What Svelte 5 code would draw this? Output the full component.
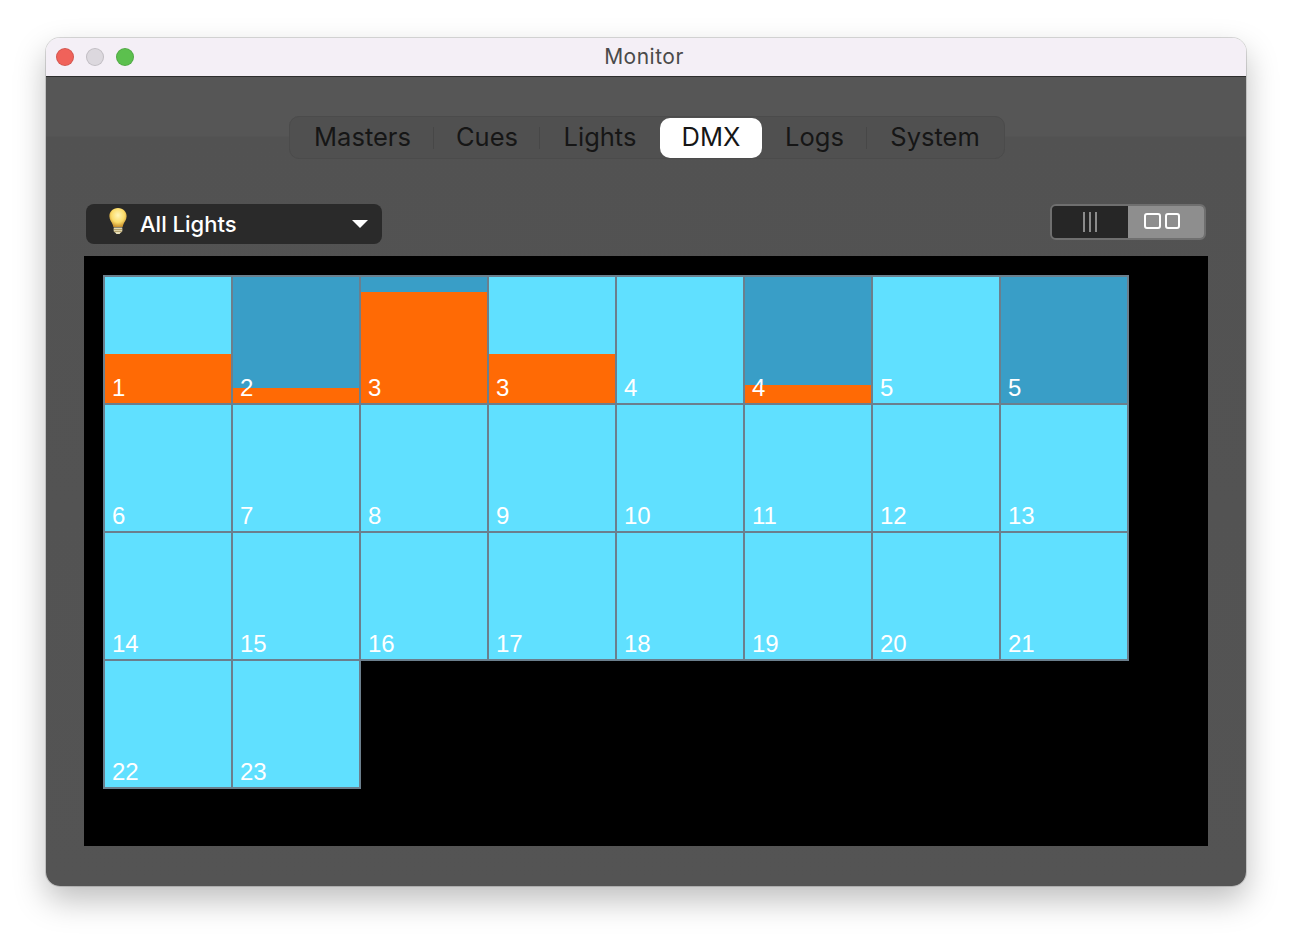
<script>
	const tabs = [
		{ label: 'Masters', width: 143 },
		{ label: 'Cues', width: 106 },
		{ label: 'Lights', width: 120 },
		{ label: 'DMX', width: 102, active: true },
		{ label: 'Logs', width: 105 },
		{ label: 'System', width: 136 }
	];

	// first row carries the live channels, the rest sit idle
	const lights = [
		{ n: 1, level: 49 },
		{ n: 2, level: 15, dim: true },
		{ n: 3, level: 111, dim: true },
		{ n: 3, level: 49 },
		{ n: 4, level: 0 },
		{ n: 4, level: 18, dim: true },
		{ n: 5, level: 0 },
		{ n: 5, level: 0, dim: true }
	];
	for (let n = 6; n <= 23; n++) lights.push({ n, level: 0 });
</script>

<div class="page">
	<div class="window">
		<header class="titlebar">
			<div class="traffic">
				<span class="dot red"></span>
				<span class="dot grey"></span>
				<span class="dot green"></span>
			</div>
			<span class="title">Monitor</span>
		</header>

		<main class="body">
			<nav class="tabs">
				{#each tabs as tab}
					<button class="tab" class:active={tab.active} style="width: {tab.width}px">{tab.label}</button>
				{/each}
			</nav>

			<div class="toolbar">
				<div class="select">
					<svg class="bulb" width="22" height="28" viewBox="0 0 20 26">
						<defs>
							<radialGradient id="glass" cx="50%" cy="38%" r="62%">
								<stop offset="0%" stop-color="#fff6b8" />
								<stop offset="60%" stop-color="#fbdc6a" />
								<stop offset="100%" stop-color="#c8902c" />
							</radialGradient>
						</defs>
						<path d="M10 1C5 1 2 4.600 2 8.600c0 3.400 2.300 5.400 3.200 8 .3.800.4 1.400.5 2h8.600c.1-.6.200-1.200.5-2 .9-2.600 3.200-4.600 3.200-8C18 4.600 15 1 10 1z" fill="url(#glass)" />
						<path d="M6 19h8v3.400c0 .8-.7 1.300-1.400 1.300L11.500 25h-3l-1.100-1.300C6.700 23.700 6 23.200 6 22.400z" fill="#e9dfb8" />
						<path d="M6.200 20.800h7.600M6.400 22.600h7.200" stroke="#a08a50" stroke-width="0.8" />
					</svg>
					<span class="select-label">All Lights</span>
					<span class="caret"></span>
				</div>

				<div class="view-toggle">
					<button class="view">
						<svg width="14" height="20" viewBox="0 0 14 20">
							<path d="M1 0v20M7 0v20M13 0v20" stroke="#8b8b8b" stroke-width="2" fill="none" />
						</svg>
					</button>
					<button class="view on">
						<svg class="cards" width="36" height="16" viewBox="0 0 36 16">
							<rect x="1" y="1" width="15" height="14" rx="2" stroke="#fff" stroke-width="2" fill="none" />
							<rect x="22" y="1" width="13" height="14" rx="2" stroke="#fff" stroke-width="2" fill="none" />
						</svg>
					</button>
				</div>
			</div>

			<section class="canvas">
				<div class="grid">
					{#each lights as light}
						<div class="cell" class:dim={light.dim}>
							{#if light.level}
								<div class="level" style="height: {light.level}px"></div>
							{/if}
							<span class="num">{light.n}</span>
						</div>
					{/each}
				</div>
			</section>
		</main>
	</div>
</div>

<style>
	:global(body) {
		background: #fff;
	}

	.page {
		padding: 38px 46px 54px;
		height: 848px;
	}

	.window {
		width: 1200px;
		height: 848px;
		border-radius: 14px;
		overflow: hidden;
		box-shadow: 0 0 0 1px rgba(0, 0, 0, 0.14), 0 14px 32px rgba(0, 0, 0, 0.26);
		display: flex;
		flex-direction: column;
		font-family: Inter, 'Noto Sans', sans-serif;
	}

	/* Title bar */
	.titlebar {
		height: 38px;
		flex: none;
		background: #f4eff6;
		border-bottom: 1px solid #2e2e2e;
		display: flex;
		align-items: center;
		justify-content: center;
		position: relative;
	}

	.traffic {
		position: absolute;
		left: 10px;
		top: 10px;
		display: flex;
		gap: 12px;
	}

	.dot {
		width: 18px;
		height: 18px;
		border-radius: 50%;
		box-sizing: border-box;
		border: 1px solid rgba(0, 0, 0, 0.12);
	}

	.red { background: #f0625a; }
	.grey { background: #dcd8de; }
	.green { background: #5cc04e; }

	.title {
		font-size: 21px;
		color: #4a4a4a;
		letter-spacing: 0.5px;
		margin: 0 4px 2px 0;
	}

	/* Main area */
	.body {
		flex: 1;
		background: linear-gradient(#565656 0, #565656 59px, #525252 60px, #545454 100%);
		padding: 39px 38px 40px;
		display: flex;
		flex-direction: column;
		align-items: stretch;
	}

	.tabs {
		align-self: center;
		display: flex;
		align-items: center;
		height: 43px;
		box-sizing: border-box;
		padding: 0 1px;
		margin-left: 2px;
		background: #505050;
		border: 1px solid #4b4b4b;
		border-radius: 10px;
	}

	.tab {
		height: 40px;
		padding: 0 0 2px;
		border: 0;
		background: none;
		font: inherit;
		font-size: 25.5px;
		color: #161616;
		position: relative;
	}

	.tab:nth-child(-n + 2)::after,
	.tab:nth-child(5)::after {
		content: '';
		position: absolute;
		right: 0;
		top: 9px;
		width: 1px;
		height: 22px;
		background: #474747;
	}

	.tab.active {
		background: #fff;
		border-radius: 10px;
	}

	.toolbar {
		margin-top: 45px;
		padding: 0 2px;
		display: flex;
		justify-content: space-between;
		align-items: flex-start;
		height: 52px;
	}

	.select {
		width: 296px;
		height: 40px;
		box-sizing: border-box;
		padding: 0 14px 0 21px;
		border-radius: 8px;
		background: #2a2a2a;
		display: flex;
		align-items: center;
		color: #fff;
	}

	.bulb {
		margin-top: -6px;
		flex: none;
	}

	.select-label {
		margin-left: 11px;
		font-size: 22px;
		font-weight: 500;
		flex: 1;
	}

	.caret {
		width: 0;
		height: 0;
		border-left: 8px solid transparent;
		border-right: 8px solid transparent;
		border-top: 8px solid #fff;
	}

	.view-toggle {
		width: 156px;
		height: 36px;
		box-sizing: border-box;
		border: 2px solid #6f6f6f;
		border-radius: 6px;
		overflow: hidden;
		display: flex;
	}

	.view {
		flex: 1;
		padding: 0;
		border: 0;
		background: #262626;
		display: flex;
		align-items: center;
		justify-content: center;
	}

	.view.on {
		background: #8e8e8e;
	}

	.cards {
		margin: -2px 8px 0 0;
	}

	/* DMX canvas */
	.canvas {
		width: 1124px;
		height: 590px;
		box-sizing: border-box;
		padding: 21px 19px 19px 21px;
		background: #000;
	}

	.grid {
		width: 1024px;
		display: flex;
		flex-wrap: wrap;
	}

	.cell {
		width: 128px;
		height: 128px;
		box-sizing: border-box;
		border-right: 2px solid #6b7f8d;
		border-bottom: 2px solid #6b7f8d;
		box-shadow: -2px 0 0 #6b7f8d, 0 -2px 0 #6b7f8d, -2px -2px 0 #6b7f8d;
		background: #60e0ff;
		position: relative;
	}

	.cell.dim {
		background: #399ec7;
	}

	.level {
		position: absolute;
		left: 0;
		right: 0;
		bottom: 0;
		background: #ff6a05;
	}

	.num {
		position: absolute;
		left: 7px;
		bottom: 1px;
		font-family: 'Liberation Sans', Arial, sans-serif;
		font-size: 24px;
		line-height: 28px;
		color: #fff;
	}
</style>
